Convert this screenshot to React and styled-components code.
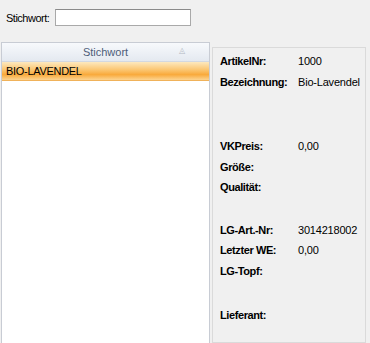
import styled, { createGlobalStyle } from 'styled-components';

const Global = createGlobalStyle`
  html, body {
    margin: 0;
    padding: 0;
    background: #f0f0f0;
  }
  body {
    font-family: "Liberation Sans", Arial, sans-serif;
    font-size: 11px;
    color: #000;
  }
`;

const Screen = styled.div`
  width: 370px;
  height: 343px;
  overflow: hidden;
  display: flex;
  flex-direction: column;
`;

const SearchBar = styled.div`
  height: 42px;
  display: flex;
  align-items: center;
  padding: 0 0 7px 6px;
  box-sizing: border-box;
  gap: 6px;
`;

const SearchLabel = styled.span`
  font-size: 11px;
  letter-spacing: -0.5px;
`;

const SearchInput = styled.input`
  width: 136px;
  height: 17px;
  box-sizing: border-box;
  border: 1px solid #a9a9a9;
  border-top-color: #8a8a8a;
  background: #fff;
  outline: none;
  margin: 0;
  padding: 0 3px;
  font: inherit;
`;

const Body = styled.div`
  flex: 1;
  display: flex;
  padding-left: 1px;
  gap: 2px;
`;

const List = styled.div`
  width: 209px;
  box-sizing: border-box;
  border: 1px solid #c8ccd4;
  border-bottom: none;
  background: #fff;
  display: flex;
  flex-direction: column;
`;

const ListHeader = styled.div`
  position: relative;
  height: 18px;
  display: flex;
  align-items: center;
  justify-content: center;
  background: linear-gradient(#f7f9fc, #e4e9f0);
  border-bottom: 1px solid #d3d8e0;
  color: #4d5d78;
  font-size: 11px;
`;

const SortMark = styled.span`
  position: absolute;
  right: 24px;
  top: 3px;
  font-size: 8px;
  color: #b4bac4;
`;

const ListRow = styled.div`
  height: 18px;
  display: flex;
  align-items: center;
  padding-left: 4px;
  font-size: 11px;
  letter-spacing: -0.3px;
  background: ${p => (p.selected
    ? 'linear-gradient(#fde9bf 0%, #fbc46e 45%, #f9aa3c 70%, #fcd491 100%)'
    : '#fff')};
  border-bottom: 1px solid ${p => (p.selected ? '#f0b25a' : 'transparent')};
`;

const Details = styled.div`
  width: 154px;
  margin-top: 5px;
  height: 296px;
  box-sizing: border-box;
  border: 1px solid #dadada;
  padding: 3px 0 0 7px;
  display: flex;
  flex-direction: column;
`;

const Field = styled.div`
  display: flex;
  height: 20.5px;
  align-items: center;
  margin-top: ${p => p.gap || 0}px;
`;

const Label = styled.span`
  width: 78px;
  font-weight: bold;
  letter-spacing: -0.4px;
`;

const Value = styled.span`
  letter-spacing: -0.2px;
`;

const fields = [
  { label: 'ArtikelNr:', value: '1000' },
  { label: 'Bezeichnung:', value: 'Bio-Lavendel' },
  { label: 'VKPreis:', value: '0,00', gap: 44 },
  { label: 'Größe:' },
  { label: 'Qualität:' },
  { label: 'LG-Art.-Nr:', value: '3014218002', gap: 22 },
  { label: 'Letzter WE:', value: '0,00' },
  { label: 'LG-Topf:' },
  { label: 'Lieferant:', value: '', gap: 24 },
];

export default function App() {
  return (
    <>
      <Global />
      <Screen>
        <SearchBar>
          <SearchLabel>Stichwort:</SearchLabel>
          <SearchInput type="text" />
        </SearchBar>
        <Body>
          <List>
            <ListHeader>
              Stichwort
              <SortMark>◬</SortMark>
            </ListHeader>
            <ListRow selected>BIO-LAVENDEL</ListRow>
          </List>
          <Details>
            {fields.map(f => (
              <Field key={f.label} gap={f.gap}>
                <Label>{f.label}</Label>
                <Value>{f.value}</Value>
              </Field>
            ))}
          </Details>
        </Body>
      </Screen>
    </>
  );
}
